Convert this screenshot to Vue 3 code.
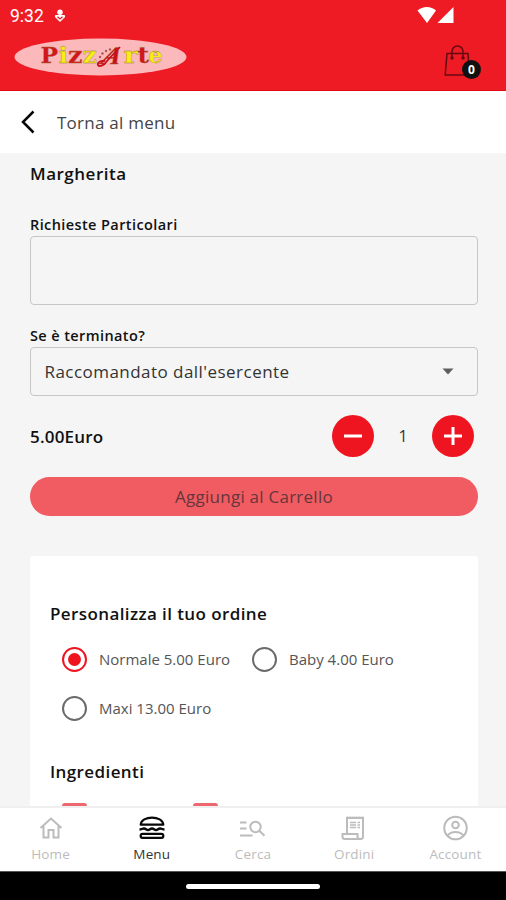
<script setup>
import { ref } from 'vue'

const quantity = ref(1)
const selected = ref('Normale')
const notes = ref('')
const sizes = [
  { id: 'Normale', label: 'Normale 5.00 Euro' },
  { id: 'Baby', label: 'Baby 4.00 Euro' },
  { id: 'Maxi', label: 'Maxi 13.00 Euro' },
]
const tabs = ['Home', 'Menu', 'Cerca', 'Ordini', 'Account']
</script>

<template>
  <div class="screen">
    <header class="header">
      <div class="status">
        <span class="clock">9:32</span>
        <svg class="status-mic" width="12" height="14" viewBox="0 0 12 14">
          <circle cx="6" cy="3.2" r="2.7" fill="#fff" />
          <path d="M1.500 6.500h9v1.500L6 12.500 1.500 8z" fill="#fff" stroke="#fff" stroke-linejoin="round" />
          <path d="M3.500 7.700 6 10l2.500-2.300" fill="none" stroke="#ef1b24" stroke-width="1.200" />
        </svg>
        <svg class="signals" width="38" height="18" viewBox="0 0 38 18">
          <path d="M0.500 4.500C5.500-.3 14.300-.3 19 4.500L10 17z" fill="#fff" />
          <path d="M36.500 1v16h-16z" fill="#fff" />
        </svg>
      </div>
      <div class="brand">
        <svg width="174" height="40" viewBox="0 0 174 40">
          <ellipse cx="86.500" cy="20" rx="86" ry="18.500" fill="#fcb9bc" />
          <g class="logo-text">
            <text x="26.500" y="26" fill="#d5141d" textLength="17.500" lengthAdjust="spacingAndGlyphs">P</text>
            <text x="44.500" y="26" fill="#f7ed18" textLength="9.500" lengthAdjust="spacingAndGlyphs">i</text>
            <text x="54" y="26" fill="#d5141d" textLength="14.500" lengthAdjust="spacingAndGlyphs">z</text>
            <text x="68.500" y="26" fill="#f7ed18" textLength="14.500" lengthAdjust="spacingAndGlyphs">z</text>
            <text class="script-a" transform="translate(86 26.500) skewX(-20)" fill="#c9101a" textLength="19" lengthAdjust="spacingAndGlyphs">A</text>
            <text x="109.500" y="26" fill="#f7ed18" textLength="14.500" lengthAdjust="spacingAndGlyphs">r</text>
            <text x="123.500" y="26" fill="#d5141d" textLength="11.500" lengthAdjust="spacingAndGlyphs">t</text>
            <text x="134.500" y="26" fill="#f7ed18" textLength="14" lengthAdjust="spacingAndGlyphs">e</text>
          </g>
          <path d="M91 24c-5-1-8 2-7 4s6 1 9-4l13-14" fill="none" stroke="#c9101a" stroke-width="1.800" />
          <g fill="#a8575a"><circle cx="86" cy="20" r="1.200" /><circle cx="88.500" cy="16.500" r="1.200" /><circle cx="92" cy="14" r="1.200" /><circle cx="96" cy="12.500" r="1.200" /></g>
        </svg>
        <div class="cart">
          <svg width="27" height="32" viewBox="0 0 27 32" fill="none" stroke="#650b10" stroke-width="1.500">
            <path d="M3 8.500h21l1.600 21.500H1.200z" />
            <path d="M8 13V6.500a5.500 5.500 0 0 1 11 0V13" />
            <circle cx="8" cy="13" r="1" /><circle cx="19" cy="13" r="1" />
          </svg>
          <span class="badge">0</span>
        </div>
      </div>
    </header>

    <div class="back-bar">
      <svg width="16" height="24" viewBox="0 0 16 24"><path d="M14.500 1.500 4 12l10.500 10.500" fill="none" stroke="#080808" stroke-width="2.500" /></svg>
      <span>Torna al menu</span>
    </div>

    <main class="content">
      <h1 class="product">Margherita</h1>
      <label class="label label-notes" for="notes">Richieste Particolari</label>
      <textarea id="notes" v-model="notes" class="notes"></textarea>
      <div class="label label-select">Se è terminato?</div>
      <div class="select">
        <span>Raccomandato dall'esercente</span>
        <svg width="12" height="7" viewBox="0 0 12 7"><path d="M.5.500h11L6 6.500z" fill="#5f5f5f" /></svg>
      </div>
      <div class="price-row">
        <span class="price">5.00Euro</span>
        <button class="round" @click="quantity = Math.max(1, quantity - 1)">
          <svg width="20" height="20" viewBox="0 0 20 20"><path d="M1 10h18" stroke="#fff" stroke-width="3" /></svg>
        </button>
        <span class="quantity">{{ quantity }}</span>
        <button class="round" @click="quantity++">
          <svg width="20" height="20" viewBox="0 0 20 20"><path d="M1 10h18M10 1v18" stroke="#fff" stroke-width="3" /></svg>
        </button>
      </div>
      <button class="add"><span>Aggiungi al Carrello</span></button>

      <section class="card">
        <h2 class="card-title">Personalizza il tuo ordine</h2>
        <div class="sizes">
          <div v-for="s in sizes" :key="s.id" class="option" @click="selected = s.id">
            <span class="radio" :class="{ on: selected === s.id }"></span>
            <span class="option-label">{{ s.label }}</span>
          </div>
        </div>
        <h2 class="card-title ingredients">Ingredienti</h2>
        <div class="checks"><span class="check"></span><span class="check"></span></div>
      </section>
    </main>

    <nav class="tabs">
      <div v-for="t in tabs" :key="t" class="tab" :class="{ active: t === 'Menu' }">
        <svg class="tab-icon" width="28" height="28" viewBox="0 0 28 28" fill="none" stroke="currentColor" stroke-width="2">
          <path v-if="t === 'Home'" d="M3.500 14 14 4.500 24.500 14M6.500 12v11.500h5V16h5v7.500h5V12" />
          <g v-else-if="t === 'Menu'">
            <path d="M2.700 10.700C3 1.200 25 1.200 25.300 10.700z" stroke-width="2.200" stroke-linejoin="round" />
            <path d="M1.500 15.500c2 0 2.500-1 4.500-1s2 1.500 4 1.500 2-1.500 4-1.500 2 1.500 4 1.500 2-1.500 4-1.500 2.500 1 4.500 1" stroke-width="2.400" />
            <rect x="2.700" y="19.800" width="22.600" height="4" rx="1.800" stroke-width="2.200" />
          </g>
          <g v-else-if="t === 'Cerca'">
            <path d="M1 8.500h6.500M1 14.500h6.500M1 21.500h12.500" />
            <circle cx="16.500" cy="13" r="5.200" /><path d="m20.200 16.700 5.300 5" />
          </g>
          <g v-else-if="t === 'Ordini'">
            <path d="M7 20V4h16v18.500a2.500 2.500 0 0 1-2.500 2.500H5A2.500 2.500 0 0 1 2.500 22.500V20h15v2.500a2.500 2.500 0 0 0 2.500 2.500" />
            <path d="M10 8.500h10M10 11h10M10 13.500h10" stroke-width="1.700" stroke-dasharray="6 1.500 3" />
            <path d="M6.500 3.500h17" stroke-dasharray="2 1" />
          </g>
          <g v-else>
            <circle cx="14.500" cy="14" r="11.300" /><circle cx="14.500" cy="11" r="3.300" />
            <path d="M6.500 21.500c4-4.800 12-4.800 16 0" />
          </g>
        </svg>
        <span class="tab-label">{{ t }}</span>
      </div>
    </nav>
    <div class="system-bar"><span class="handle"></span></div>
  </div>
</template>

<style>
body { margin: 0; }
</style>

<style scoped>
.screen {
  width: 506px;
  height: 900px;
  display: flex;
  flex-direction: column;
  overflow: hidden;
  background: #f5f5f5;
  color: #111;
  font-family: "Open Sans", "Noto Sans", sans-serif;
}
.screen * { box-sizing: border-box; }
button { border: 0; padding: 0; font: inherit; }
.header { height: 91px; flex: none; background: #ef1b24; border-bottom: 1px solid #e00b15; }
.status { height: 33px; display: flex; align-items: center; padding: 0 51px 2px 10px; }
.clock { width: 44px; color: #fff; font: 17.500px/20px Roboto, sans-serif; }
.signals { margin: -2px 0 0 auto; }
.brand { height: 50px; display: flex; justify-content: space-between; padding: 4px 25px 0 14px; }
.logo-text text { font: bold 23px "DejaVu Serif", serif; stroke: #96702f; stroke-width: .3px; }
.logo-text .script-a { font: italic bold 25px "Liberation Serif", serif; }
.cart { position: relative; width: 37px; height: 46px; padding-top: 8px; }
.badge {
  position: absolute;
  left: 18px;
  top: 23px;
  width: 19px;
  height: 19px;
  border-radius: 50%;
  background: #111;
  color: #fff;
  font-size: 12px;
  font-weight: 700;
  line-height: 19px;
  text-align: center;
}
.back-bar {
  height: 62px;
  flex: none;
  display: flex;
  align-items: center;
  gap: 22px;
  padding-left: 19px;
  background: #fff;
  color: #444;
  font-size: 17px;
  letter-spacing: .25px;
}
.content { flex: 1; min-height: 0; overflow: hidden; padding: 0 28px 0 30px; display: flex; flex-direction: column; }
.content > * { flex: none; }
.product { margin: 0; height: 42px; font-size: 17px; font-weight: 600; line-height: 42px; letter-spacing: .5px; }
.label { font-size: 14.500px; font-weight: 600; line-height: 20px; letter-spacing: .4px; }
.label-notes { margin-top: 20px; margin-bottom: 1px; }
.notes { display: block; width: 100%; height: 69px; border: 1px solid #c6c6c6; border-radius: 4px; background: transparent; resize: none; }
.label-select { margin-top: 21px; }
.select {
  height: 49px;
  margin-top: 1px;
  border: 1px solid #c6c6c6;
  border-radius: 4px;
  display: flex;
  align-items: center;
  justify-content: space-between;
  padding: 0 23px 0 13.500px;
  color: #333;
  font-size: 17px;
  letter-spacing: .46px;
}
.price-row { height: 42px; margin-top: 19px; display: flex; align-items: center; padding-right: 4px; }
.price { flex: 1; font-size: 17px; font-weight: 600; letter-spacing: .2px; }
.round { width: 42px; height: 42px; border-radius: 50%; background: #ef1520; display: grid; place-items: center; }
.quantity { width: 58px; text-align: center; font-size: 16px; color: #333; }
.add { height: 39px; margin-top: 20px; border-radius: 20px; background: #f15c63; color: #65363a; font-size: 17px; letter-spacing: .25px; }
.card { height: 300px; margin-top: 40px; padding: 43px 20px 0; border-radius: 3px; background: #fff; }
.card-title { margin: 0; font-size: 17px; font-weight: 600; line-height: 30px; letter-spacing: .4px; }
.sizes { display: grid; grid-template-columns: 190px 1fr; grid-auto-rows: 49px; margin-top: 6px; padding-left: 12px; }
.option { display: flex; align-items: center; gap: 12px; color: #555; font-size: 15px; white-space: nowrap; }
.option-label { margin-top: -1px; }
.radio { width: 25px; height: 25px; flex: none; border: 2px solid #6b6b6b; border-radius: 50%; display: grid; place-items: center; }
.radio.on { border-color: #ef1520; }
.radio.on::after { content: ""; width: 13px; height: 13px; border-radius: 50%; background: #ef1520; }
.ingredients { margin-top: 24px; }
.checks { display: flex; gap: 106px; margin-top: 16px; padding-left: 12px; }
.check { width: 25px; height: 25px; border-radius: 3px; background: #ed686e; }
.tabs { height: 65px; flex: none; display: grid; grid-template-columns: repeat(5, 1fr); background: #fff; border-top: 2px solid #efefef; }
.tab { display: flex; flex-direction: column; align-items: center; padding-top: 6px; color: #bcbcbc; }
.tab.active { color: #080808; }
.tab-label { margin-top: 3px; font-size: 13.500px; line-height: 18px; letter-spacing: .15px; }
.active .tab-label { color: #333; }
.system-bar { height: 29px; flex: none; display: grid; place-items: center; background: #000; border-top: 1px solid #555; }
.handle { width: 134px; height: 5px; border-radius: 3px; background: #fff; }
</style>
